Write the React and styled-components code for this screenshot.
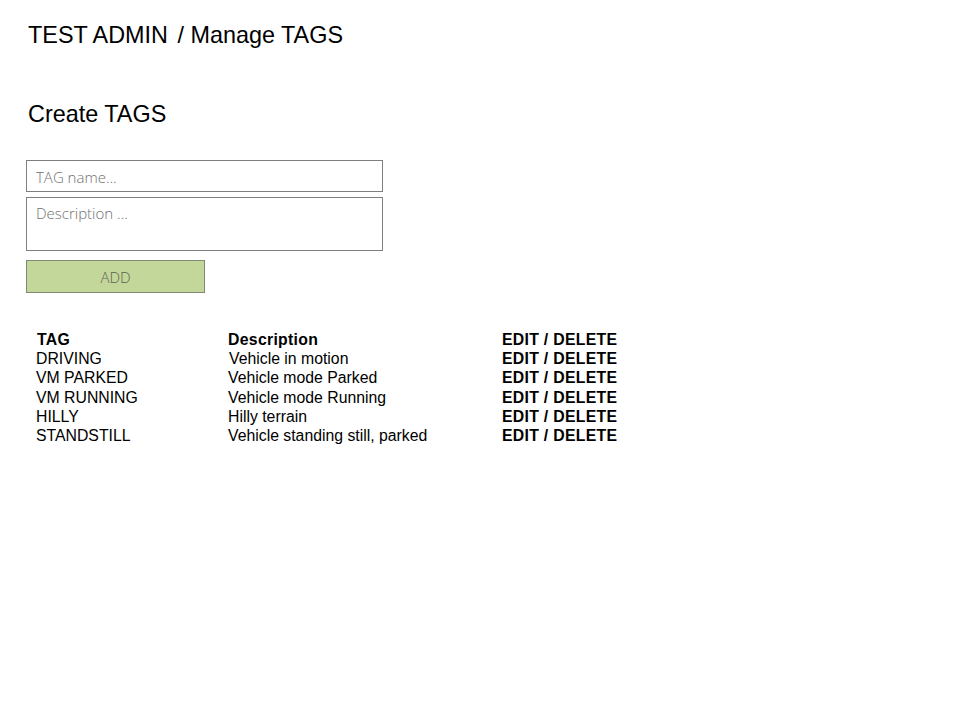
import React from 'react';
import styled, { createGlobalStyle } from 'styled-components';

const GlobalStyle = createGlobalStyle`
    body {
        margin: 0;
        background: #fff;
        font-family: "Liberation Sans", Arial, sans-serif;
        color: #000;
    }
`;

const Page = styled.div`
    width: 960px;
    height: 720px;
    padding: 20px 0 0 28px;
    box-sizing: border-box;
`;

const Title = styled.h1`
    margin: 0;
    font-size: 23.4px;
    font-weight: normal;
    line-height: 30px;
    white-space: pre;
`;

const Crumb = styled.span`
    margin-left: 3px;
`;

const SubTitle = styled.h2`
    margin: 49px 0 0 0;
    font-size: 23.4px;
    font-weight: normal;
    line-height: 30px;
`;

const Form = styled.form`
    display: flex;
    flex-direction: column;
    gap: 5px;
    margin: 31px 0 0 -2px;
    width: 357px;
`;

const field = `
    box-sizing: border-box;
    width: 100%;
    border: 1px solid #7f7f7f;
    border-radius: 0;
    padding: 0 9px;
    font-family: "Open Sans", "Noto Sans", sans-serif;
    font-weight: 300;
    font-size: 15px;
    color: #333;
    outline: none;
    &::placeholder {
        color: #6f6f6f;
    }
`;

const TagInput = styled.input`
    ${field}
    height: 32px;
    padding-top: 1px;
`;

const DescInput = styled.textarea`
    ${field}
    height: 54px;
    padding-top: 5px;
    resize: none;
`;

const AddButton = styled.button`
    box-sizing: border-box;
    width: 179px;
    height: 33px;
    margin-top: 4px;
    background: #c4d79b;
    border: 1px solid #7f8a72;
    border-radius: 0;
    font-family: "Open Sans", "Noto Sans", sans-serif;
    font-weight: 300;
    font-size: 15px;
    color: #5a6350;
    cursor: pointer;
`;

const Table = styled.div`
    display: grid;
    grid-template-columns: 192px 274px auto;
    margin: 37px 0 0 8px;
    font-size: 15.8px;
    line-height: 19.2px;
    width: 600px;
`;

const Cell = styled.div`
    font-weight: ${p => (p.bold ? 'bold' : 'normal')};
    letter-spacing: ${p => (p.bold ? '0.3px' : '0')};
    padding-left: ${p => p.nudge || 0}px;
    white-space: nowrap;
`;

const tags = [
    { name: 'DRIVING', desc: 'Vehicle in motion', nudge: 1 },
    { name: 'VM PARKED', desc: 'Vehicle mode Parked' },
    { name: 'VM RUNNING', desc: 'Vehicle mode Running' },
    { name: 'HILLY', desc: 'Hilly terrain' },
    { name: 'STANDSTILL', desc: 'Vehicle standing still, parked' },
];

export default function App() {
    return (
        <Page>
            <GlobalStyle />
            <Title>
                TEST ADMIN <Crumb>/ Manage TAGS</Crumb>
            </Title>
            <SubTitle>Create TAGS</SubTitle>
            <Form onSubmit={e => e.preventDefault()}>
                <TagInput placeholder="TAG name..." />
                <DescInput placeholder="Description ..." />
                <div>
                    <AddButton type="submit">ADD</AddButton>
                </div>
            </Form>
            <Table>
                <Cell bold nudge={1}>TAG</Cell>
                <Cell bold>Description</Cell>
                <Cell bold>EDIT / DELETE</Cell>
                {tags.map(t => (
                    <React.Fragment key={t.name}>
                        <Cell>{t.name}</Cell>
                        <Cell nudge={t.nudge}>{t.desc}</Cell>
                        <Cell bold>EDIT / DELETE</Cell>
                    </React.Fragment>
                ))}
            </Table>
        </Page>
    );
}
